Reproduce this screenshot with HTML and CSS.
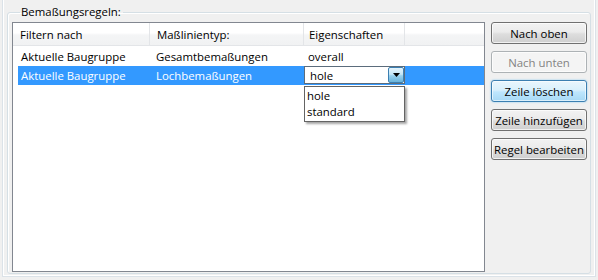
FILE: index.html
```html
<!DOCTYPE html>
<html lang="de">
<head>
    <meta charset="UTF-8">
    <title>Bemaßungsregeln</title>
    <link rel="stylesheet" href="styles.css">
</head>
<body>
    <div class="frame">
        <fieldset class="group">
            <legend>Bemaßungsregeln:</legend>

            <div class="list-view">
                <div class="list-header">
                    <div class="col col-filter">Filtern nach</div>
                    <div class="col col-type">Maßlinientyp:</div>
                    <div class="col col-props">Eigenschaften</div>
                    <div class="col col-rest"></div>
                </div>

                <div class="list-body">
                    <div class="row">
                        <div class="cell col-filter">Aktuelle Baugruppe</div>
                        <div class="cell col-type">Gesamtbemaßungen</div>
                        <div class="cell col-props">overall</div>
                    </div>
                    <div class="row selected">
                        <div class="cell col-filter">Aktuelle Baugruppe</div>
                        <div class="cell col-type">Lochbemaßungen</div>
                        <div class="cell editor">
                            <div class="combo">
                                <span class="combo-value">hole</span>
                                <span class="combo-button">
                                    <svg width="7" height="4" viewBox="0 0 7 4"><path d="M0 0H7L3.5 4Z" fill="#000"/></svg>
                                </span>
                            </div>
                            <div class="combo-list">
                                <div class="combo-item">hole</div>
                                <div class="combo-item">standard</div>
                            </div>
                        </div>
                    </div>
                </div>
            </div>

            <div class="side-buttons">
                <button class="btn">Nach oben</button>
                <button class="btn" disabled>Nach unten</button>
                <button class="btn focused">Zeile löschen</button>
                <button class="btn">Zeile hinzufügen</button>
                <button class="btn">Regel bearbeiten</button>
            </div>
        </fieldset>
    </div>
</body>
</html>
```

FILE: styles.css
```css
* {
    margin: 0;
    padding: 0;
    box-sizing: border-box;
}

body {
    font-family: "Open Sans", "Noto Sans", Arial, sans-serif;
    font-size: 11.4px;
    color: #000;
    background-color: #f0f0f0;
    white-space: nowrap;
}

.frame {
    margin: 0 2px;
    height: 277px;
    padding: 4px 4px 2px 4px;
    border: 1px solid #dbe2e8;
    border-top: none;
    box-shadow: inset 1px 0 0 #fff, inset -1px 0 0 #fff, inset 0 -1px 0 #fff;
}

.group {
    display: flex;
    height: 270px;
    padding: 2px 3px 1px 4px;
    border: 1px solid #d5dfe5;
    border-radius: 3px;
    box-shadow: inset 1px 1px 0 #fff;
}

.group legend {
    margin-left: 8px;
    padding: 0 2px 0 1px;
    line-height: 16px;
}

/* list view */

.list-view {
    flex: 1;
    display: flex;
    flex-direction: column;
    background-color: #fff;
    border: 1px solid #828790;
}

.list-header {
    display: flex;
    height: 23px;
    background: linear-gradient(#fff 0%, #fff 45%, #f4f5f6 55%, #f1f2f3 100%);
    border-bottom: 1px solid #e3e5e8;
}

.col {
    display: flex;
    align-items: center;
    padding-left: 7px;
    border-right: 1px solid #e3e5e8;
}

.col-filter {
    width: 137px;
}

.col-type {
    width: 154px;
}

.col-props {
    width: 101px;
}

.list-header .col-props {
    padding-left: 5px;
}

.col-rest {
    flex: 1;
    border-right: none;
}

.list-body {
    padding-top: 1px;
}

.row {
    display: flex;
    height: 19px;
    margin-left: 5px;
}

.cell {
    display: flex;
    align-items: center;
    padding-left: 3px;
}

.row .col-filter {
    width: 132px;
}

.row .col-type {
    width: 154px;
    padding-left: 6px;
}

.row .col-props {
    padding-left: 4px;
}

.row.selected {
    background-color: #3399ff;
    color: #fff;
}

/* in-place combo editor */

.row .editor {
    position: relative;
    padding-left: 0;
    align-items: flex-start;
    color: #000;
}

.combo {
    display: flex;
    align-items: center;
    width: 101px;
    height: 18px;
    background-color: #fff;
    border: 1px solid #5b6c7c;
}

.combo-value {
    flex: 1;
    padding-left: 5px;
}

.combo-button {
    display: flex;
    align-items: center;
    justify-content: center;
    width: 16px;
    height: 16px;
    background: linear-gradient(#e5f4fc 0%, #c4e5f6 45%, #98d1ef 55%, #68b3db 100%);
    border: 1px solid #3c7fb1;
    border-radius: 2px;
}

.combo-list {
    position: absolute;
    top: 20px;
    left: 0;
    width: 101px;
    padding: 1px 0;
    background-color: #fff;
    border: 1px solid #646464;
    box-shadow: 2px 2px 2px rgba(0, 0, 0, 0.35);
}

.combo-item {
    height: 16px;
    line-height: 16px;
    padding-left: 2px;
}

/* buttons */

.side-buttons {
    display: flex;
    flex-direction: column;
    gap: 7px;
    margin-left: 6px;
}

.btn {
    width: 96px;
    height: 22px;
    padding: 0;
    font-family: inherit;
    font-size: 11.4px;
    color: #000;
    white-space: nowrap;
    border: 1px solid #707070;
    border-radius: 3px;
    background: linear-gradient(#f2f2f2 0%, #ebebeb 45%, #dddddd 55%, #cfcfcf 100%);
    box-shadow: inset 0 0 0 1px rgba(255, 255, 255, 0.7);
}

.btn:disabled {
    color: #838383;
    border-color: #adb2b5;
    background: #f4f4f4;
}

.btn.focused {
    border-color: #3c7fb1;
    background: linear-gradient(#eaf6fd 0%, #d9f0fc 45%, #bee6fd 55%, #a7d9f5 100%);
    box-shadow: inset 0 0 0 1px rgba(255, 255, 255, 0.6), 0 0 2px #7fc4ef;
}
```
